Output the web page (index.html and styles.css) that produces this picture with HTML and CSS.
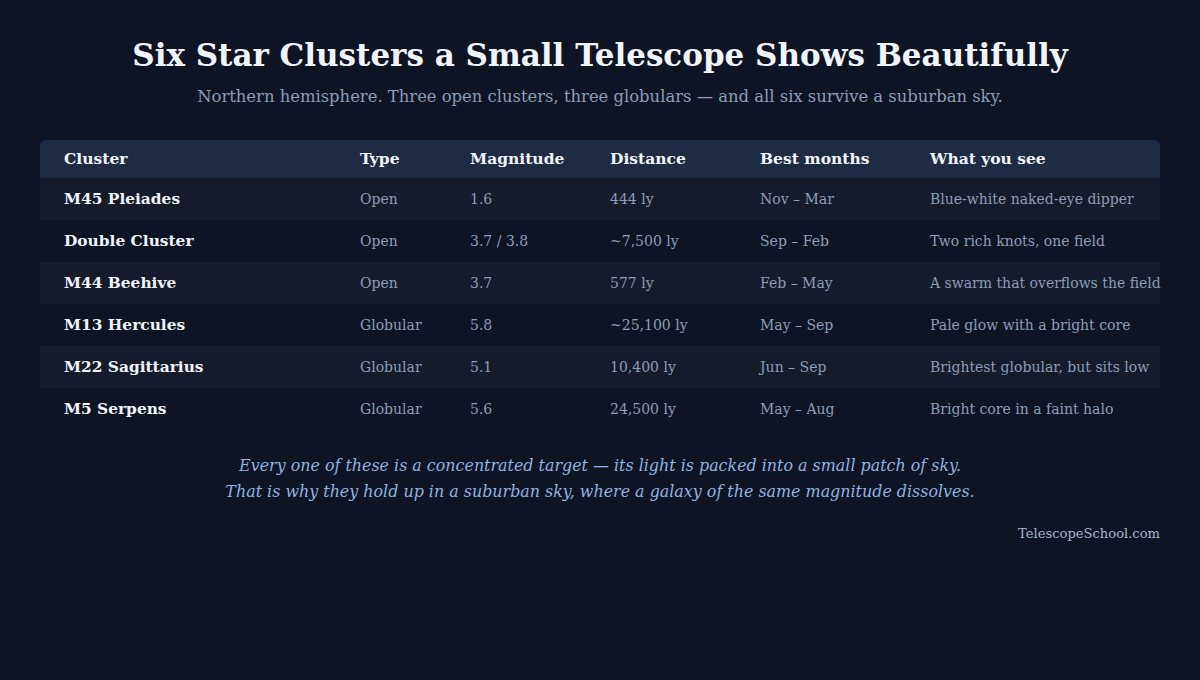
FILE: index.html
```html
<!DOCTYPE html>
<html lang="en">
<head>
<meta charset="utf-8">
<title>Six Star Clusters</title>
<link rel="stylesheet" href="styles.css">
</head>
<body>
<main class="page">
  <header class="intro">
    <h1 class="title">Six Star Clusters a Small Telescope Shows Beautifully</h1>
    <p class="subtitle">Northern hemisphere. Three open clusters, three globulars — and all six survive a suburban sky.</p>
  </header>
  <table class="clusters">
    <colgroup>
      <col class="c1"><col class="c2"><col class="c3"><col class="c4"><col class="c5"><col class="c6">
    </colgroup>
    <thead>
      <tr><th>Cluster</th><th>Type</th><th>Magnitude</th><th>Distance</th><th>Best months</th><th>What you see</th></tr>
    </thead>
    <tbody>
      <tr><td>M45 Pleiades</td><td>Open</td><td>1.6</td><td>444 ly</td><td>Nov – Mar</td><td>Blue-white naked-eye dipper</td></tr>
      <tr><td>Double Cluster</td><td>Open</td><td>3.7 / 3.8</td><td>~7,500 ly</td><td>Sep – Feb</td><td>Two rich knots, one field</td></tr>
      <tr><td>M44 Beehive</td><td>Open</td><td>3.7</td><td>577 ly</td><td>Feb – May</td><td>A swarm that overflows the field</td></tr>
      <tr><td>M13 Hercules</td><td>Globular</td><td>5.8</td><td>~25,100 ly</td><td>May – Sep</td><td>Pale glow with a bright core</td></tr>
      <tr><td>M22 Sagittarius</td><td>Globular</td><td>5.1</td><td>10,400 ly</td><td>Jun – Sep</td><td>Brightest globular, but sits low</td></tr>
      <tr><td>M5 Serpens</td><td>Globular</td><td>5.6</td><td>24,500 ly</td><td>May – Aug</td><td>Bright core in a faint halo</td></tr>
    </tbody>
  </table>
  <p class="note">Every one of these is a concentrated target — its light is packed into a small patch of sky.<br>That is why they hold up in a suburban sky, where a galaxy of the same magnitude dissolves.</p>
  <p class="credit">TelescopeSchool.com</p>
</main>
</body>
</html>
```
FILE: styles.css
```css
html, body {
  margin: 0;
  padding: 0;
  background: #0e1423;
}
body {
  width: 1200px;
  height: 680px;
  overflow: hidden;
  font-family: Georgia, "DejaVu Serif", "Liberation Serif", serif;
  color: #e8edf6;
}
.page {
  padding: 34px 40px 0;
}
.intro {
  text-align: center;
}
.title {
  margin: 0;
  font-size: 31px;
  line-height: 42px;
  font-weight: bold;
  color: #f1f4fa;
}
.subtitle {
  margin: 8px 0 0;
  font-size: 16.4px;
  line-height: 26px;
  color: #8e9cb8;
}
.clusters {
  margin-top: 30px;
  width: 1120px;
  border-collapse: separate;
  border-spacing: 0;
  table-layout: fixed;
}
.c1 { width: 320px; }
.c2 { width: 110px; }
.c3 { width: 140px; }
.c4 { width: 150px; }
.c5 { width: 170px; }
.c6 { width: 230px; }
.clusters th {
  background: #1f2b44;
  height: 37px;
  padding: 0 0 1px;
  text-align: left;
  vertical-align: middle;
  font-size: 15.5px;
  line-height: 20px;
  font-weight: bold;
  color: #f1f4fa;
  white-space: nowrap;
}
.clusters th:first-child { border-top-left-radius: 6px; }
.clusters th:last-child { border-top-right-radius: 6px; }
.clusters td {
  height: 42px;
  padding: 0;
  vertical-align: middle;
  font-size: 14px;
  line-height: 20px;
  color: #8e9cb8;
  white-space: nowrap;
  overflow: visible;
}
.clusters th:first-child,
.clusters td:first-child {
  padding-left: 24px;
}
.clusters td:first-child {
  font-size: 15.4px;
  font-weight: bold;
  color: #f1f4fa;
}
.clusters tbody tr:nth-child(odd) td {
  background: #151b2b;
}
.note {
  margin: 23px 0 0;
  text-align: center;
  font-style: italic;
  font-size: 15.9px;
  line-height: 26px;
  color: #8fb3e2;
}
.credit {
  margin: 20px 0 0;
  text-align: right;
  font-size: 13.1px;
  line-height: 18px;
  color: #aab6cc;
}
```
